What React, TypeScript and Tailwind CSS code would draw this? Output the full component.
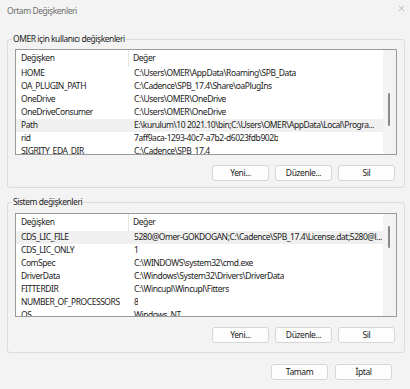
import { X } from 'lucide-react';

const userVars: [string, string][] = [
  ['HOME', 'C:\\Users\\OMER\\AppData\\Roaming\\SPB_Data'],
  ['OA_PLUGIN_PATH', 'C:\\Cadence\\SPB_17.4\\Share\\oaPlugIns'],
  ['OneDrive', 'C:\\Users\\OMER\\OneDrive'],
  ['OneDriveConsumer', 'C:\\Users\\OMER\\OneDrive'],
  ['Path', 'E:\\kurulum\\10 2021.10\\bin;C:\\Users\\OMER\\AppData\\Local\\Progra...'],
  ['rid', '7aff9aca-1293-40c7-a7b2-d6023fdb902b'],
  ['SIGRITY_EDA_DIR', 'C:\\Cadence\\SPB_17.4'],
];

const sysVars: [string, string][] = [
  ['CDS_LIC_FILE', '5280@Omer-GOKDOGAN;C:\\Cadence\\SPB_17.4\\License.dat;5280@l...'],
  ['CDS_LIC_ONLY', '1'],
  ['ComSpec', 'C:\\WINDOWS\\system32\\cmd.exe'],
  ['DriverData', 'C:\\Windows\\System32\\Drivers\\DriverData'],
  ['FITTERDIR', 'C:\\Wincupl\\Wincupl\\Fitters'],
  ['NUMBER_OF_PROCESSORS', '8'],
  ['OS', 'Windows_NT'],
];

const Btn = ({ label }: { label: string }) => (
  <button className="w-[57px] h-[16px] bg-[#fdfdfd] border border-[#d6d6d6] rounded-[3px] text-[8.5px] tracking-[-0.4px] text-[#1b1b1b] leading-none">
    {label}
  </button>
);

const VarList = ({
  rows,
  selected,
  height,
  thumbTop,
  thumbHeight,
}: {
  rows: [string, string][];
  selected: number;
  height: string;
  thumbTop: string;
  thumbHeight: string;
}) => (
  <div className={`relative bg-white border border-[#9a9a9a] overflow-hidden ${height}`}>
    <div className="flex h-[17px] items-center">
      <div className="w-[113px] pl-[5px] h-full flex items-center border-r border-[#e5e5e5]">Değişken</div>
      <div className="pl-[4px]">Değer</div>
    </div>
    {rows.map(([name, value], i) => (
      <div
        key={name}
        className={`flex h-[13px] items-center mr-[13px] whitespace-nowrap ${i === selected ? 'bg-[#f0f0f0]' : ''}`}
      >
        <div className="w-[114px] pl-[5px] shrink-0">{name}</div>
        <div className="pl-[4px] overflow-hidden">{value}</div>
      </div>
    ))}
    {/* scrollbar */}
    <div className="absolute right-0 top-0 bottom-0 w-[13px] bg-[#f3f3f3]">
      <div className={`absolute left-[5px] w-[2px] rounded-full bg-[#8a8a8a] ${thumbTop} ${thumbHeight}`} />
    </div>
  </div>
);

const App = () => {
  return (
    <div
      className="w-[410px] h-[389px] bg-[#f3f3f3] text-[8.5px] tracking-[-0.45px] text-[#1b1b1b] overflow-hidden"
      style={{ fontFamily: '"Noto Sans", sans-serif' }}
    >
      {/* title bar */}
      <div className="h-[22px] flex items-center justify-between pl-[7px] pr-[4px]">
        <span className="text-[#6e6e6e]">Ortam Değişkenleri</span>
        <X className="w-[9px] h-[9px] text-[#8a8a8a] -mt-[6px]" strokeWidth={1.5} />
      </div>

      {/* user vars */}
      <div className="relative mt-[17px] ml-[7px] mr-[5px] border border-[#dcdcdc] rounded-[3px] pt-[9px] pl-[7px] pr-[7px] pb-[6px]">
        <span className="absolute -top-[7px] left-[4px] px-[1px] bg-[#f3f3f3]">OMER için kullanıcı değişkenleri</span>
        <VarList rows={userVars} selected={4} height="h-[106px]" thumbTop="top-[43px]" thumbHeight="h-[33px]" />
        <div className="flex justify-end gap-[6px] mt-[10px] pr-[2px]">
          <Btn label="Yeni..." />
          <Btn label="Düzenle..." />
          <Btn label="Sil" />
        </div>
      </div>

      {/* system vars */}
      <div className="relative mt-[14px] ml-[7px] mr-[5px] border border-[#dcdcdc] rounded-[3px] pt-[10px] pl-[7px] pr-[7px] pb-[9px]">
        <span className="absolute -top-[7px] left-[4px] px-[1px] bg-[#f3f3f3]">Sistem değişkenleri</span>
        <VarList rows={sysVars} selected={0} height="h-[104px]" thumbTop="top-[12px]" thumbHeight="h-[22px]" />
        <div className="flex justify-end gap-[6px] mt-[10px] pr-[2px]">
          <Btn label="Yeni..." />
          <Btn label="Düzenle..." />
          <Btn label="Sil" />
        </div>
      </div>

      {/* dialog buttons */}
      <div className="flex justify-end gap-[7px] mt-[11px] pr-[18px]">
        <Btn label="Tamam" />
        <Btn label="İptal" />
      </div>
    </div>
  );
};

export default App;
